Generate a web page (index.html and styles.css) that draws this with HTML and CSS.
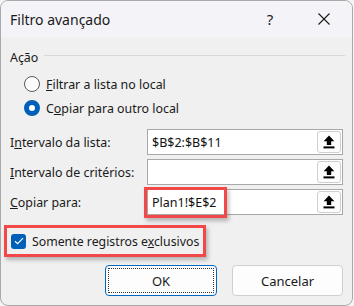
FILE: index.html
```html
<!DOCTYPE html>
<html lang="pt">
<head>
<meta charset="utf-8">
<link rel="stylesheet" href="styles.css">
</head>
<body>
<div class="window">
  <div class="titlebar">
    <span class="title">Filtro avançado</span>
    <span class="tb-btn help">?</span>
    <span class="tb-btn close">
      <svg width="12" height="12" viewBox="0 0 12 12"><path d="M0.5 0.5 L11.5 11.5 M11.5 0.5 L0.5 11.5" stroke="#1a1a1a" stroke-width="1.1" fill="none"/></svg>
    </span>
  </div>
  <div class="body">
    <div class="group-head"><span>Ação</span><span class="rule"></span></div>
    <div class="radio-row"><span class="radio"></span><span><u>F</u>iltrar a lista no local</span></div>
    <div class="radio-row"><span class="radio on"></span><span>C<u>o</u>piar para outro local</span></div>

    <div class="field-row first">
      <span class="label">I<u>n</u>tervalo da lista:</span>
      <div class="input"><span class="val">$B$2:$B$11</span><span class="pick"><svg width="12" height="14" viewBox="0 0 12 14"><path d="M6 0.5 L11.4 6.2 H8.2 V10 H3.8 V6.2 H0.6 Z" fill="#000"/><rect x="0.5" y="11.4" width="11" height="2" fill="#000"/></svg></span></div>
    </div>
    <div class="field-row">
      <span class="label"><u>I</u>ntervalo de critérios:</span>
      <div class="input"><span class="val"></span><span class="pick"><svg width="12" height="14" viewBox="0 0 12 14"><path d="M6 0.5 L11.4 6.2 H8.2 V10 H3.8 V6.2 H0.6 Z" fill="#000"/><rect x="0.5" y="11.4" width="11" height="2" fill="#000"/></svg></span></div>
    </div>
    <div class="field-row">
      <span class="label"><u>C</u>opiar para:</span>
      <div class="input"><span class="val">Plan1!$E$2</span><span class="mark"></span><span class="pick"><svg width="12" height="14" viewBox="0 0 12 14"><path d="M6 0.5 L11.4 6.2 H8.2 V10 H3.8 V6.2 H0.6 Z" fill="#000"/><rect x="0.5" y="11.4" width="11" height="2" fill="#000"/></svg></span></div>
    </div>

    <div class="check-row">
      <span class="check"><svg width="10" height="8" viewBox="0 0 10 8"><path d="M1 4.2 L3.6 6.6 L9 1.2" stroke="#fff" stroke-width="1.2" fill="none"/></svg></span>
      <span>Somente registros e<u>x</u>clusivos</span>
    </div>

    <div class="buttons">
      <button class="btn ok">OK</button>
      <button class="btn">Cancelar</button>
    </div>
  </div>
</div>
</body>
</html>
```
FILE: styles.css
```css
html, body {
  margin: 0;
  padding: 0;
  background: #f4f4f4;
}
body {
  font-family: "Noto Sans", "Open Sans", sans-serif;
  font-size: 12.4px;
  color: #1a1a1a;
}
.window {
  width: 351px;
  height: 304px;
  border: 1px solid #a9a9a9;
  border-radius: 8px;
  overflow: hidden;
  background: #f0f0f0;
  display: flex;
  flex-direction: column;
}
.titlebar {
  height: 36px;
  flex: 0 0 36px;
  background: #f4f4f8;
  display: flex;
  align-items: center;
  padding-left: 9px;
}
.title {
  font-size: 14px;
  flex: 1;
}
.tb-btn {
  display: flex;
  align-items: center;
  justify-content: center;
  height: 36px;
}
.help {
  width: 20px;
  font-size: 15px;
  margin-right: 37px;
}
.close {
  width: 14px;
  margin-right: 21px;
}
.body {
  flex: 1;
  padding: 0 9px 0 9px;
  display: flex;
  flex-direction: column;
}
.group-head {
  display: flex;
  align-items: center;
  height: 20px;
  margin-top: 10px;
}
.rule {
  flex: 1;
  height: 1px;
  background: #d8d8d8;
  margin-left: 6px;
  margin-right: -2px;
  position: relative;
  top: -2px;
}
.radio-row {
  display: flex;
  align-items: center;
  height: 24px;
  padding-left: 14px;
}
.group-head + .radio-row { margin-top: 5px; }
.radio {
  width: 14px;
  height: 14px;
  border: 1px solid #5a5a5a;
  border-radius: 50%;
  background: #fbfbfb;
  margin-right: 6px;
  box-sizing: content-box;
}
.radio.on {
  width: 6px;
  height: 6px;
  border: 5px solid #005fb8;
  background: #fff;
}
.field-row {
  display: flex;
  align-items: center;
  height: 26px;
  margin-top: 4px;
}
.field-row.first { margin-top: 9px; }
.label {
  width: 137px;
  flex: 0 0 137px;
}
.input {
  position: relative;
  flex: 1;
  height: 26px;
  box-sizing: border-box;
  border: 1px solid #a8a8a8;
  background: #fff;
  display: flex;
  align-items: center;
  padding-left: 4px;
}
.val {
  flex: 1;
  font-size: 12.5px;
  color: #111;
}
.pick {
  width: 24px;
  height: 22px;
  box-sizing: border-box;
  border: 1px solid #cfcfcf;
  border-radius: 3px;
  background: #fdfdfd;
  margin-right: 1px;
  display: flex;
  align-items: center;
  justify-content: center;
}
.mark {
  position: absolute;
  left: -4px;
  top: -3px;
  width: 83px;
  height: 31px;
  box-sizing: border-box;
  border: 3px solid #f24848;
  box-shadow: 2px 3px 4px rgba(0, 0, 0, 0.25);
}
.check-row {
  display: flex;
  align-items: center;
  align-self: flex-start;
  margin-top: 10px;
  margin-left: -6px;
  height: 32px;
  box-sizing: border-box;
  padding: 0 4px 0 4px;
  border: 3px solid #f24848;
  box-shadow: 2px 3px 4px rgba(0, 0, 0, 0.25);
  font-size: 12.3px;
}
.check {
  width: 15px;
  height: 15px;
  border-radius: 3px;
  background: #005fb8;
  display: flex;
  align-items: center;
  justify-content: center;
  margin-right: 6px;
}
.buttons {
  display: flex;
  justify-content: flex-end;
  gap: 15px;
  margin-top: 8px;
}
.btn {
  position: relative;
  width: 111px;
  height: 31px;
  box-sizing: border-box;
  border: 1px solid #d0d0d0;
  border-radius: 4px;
  background: #fdfdfd;
  font-family: "Noto Sans", "Open Sans", sans-serif;
  font-size: 13px;
  color: #1a1a1a;
  padding: 0;
}
.btn.ok {
  width: 112px;
  border-color: #0067c0;
}
.btn.ok::after {
  content: "";
  position: absolute;
  left: 2px;
  top: 2px;
  right: 2px;
  bottom: 2px;
  border: 1px dotted #333;
}
```
